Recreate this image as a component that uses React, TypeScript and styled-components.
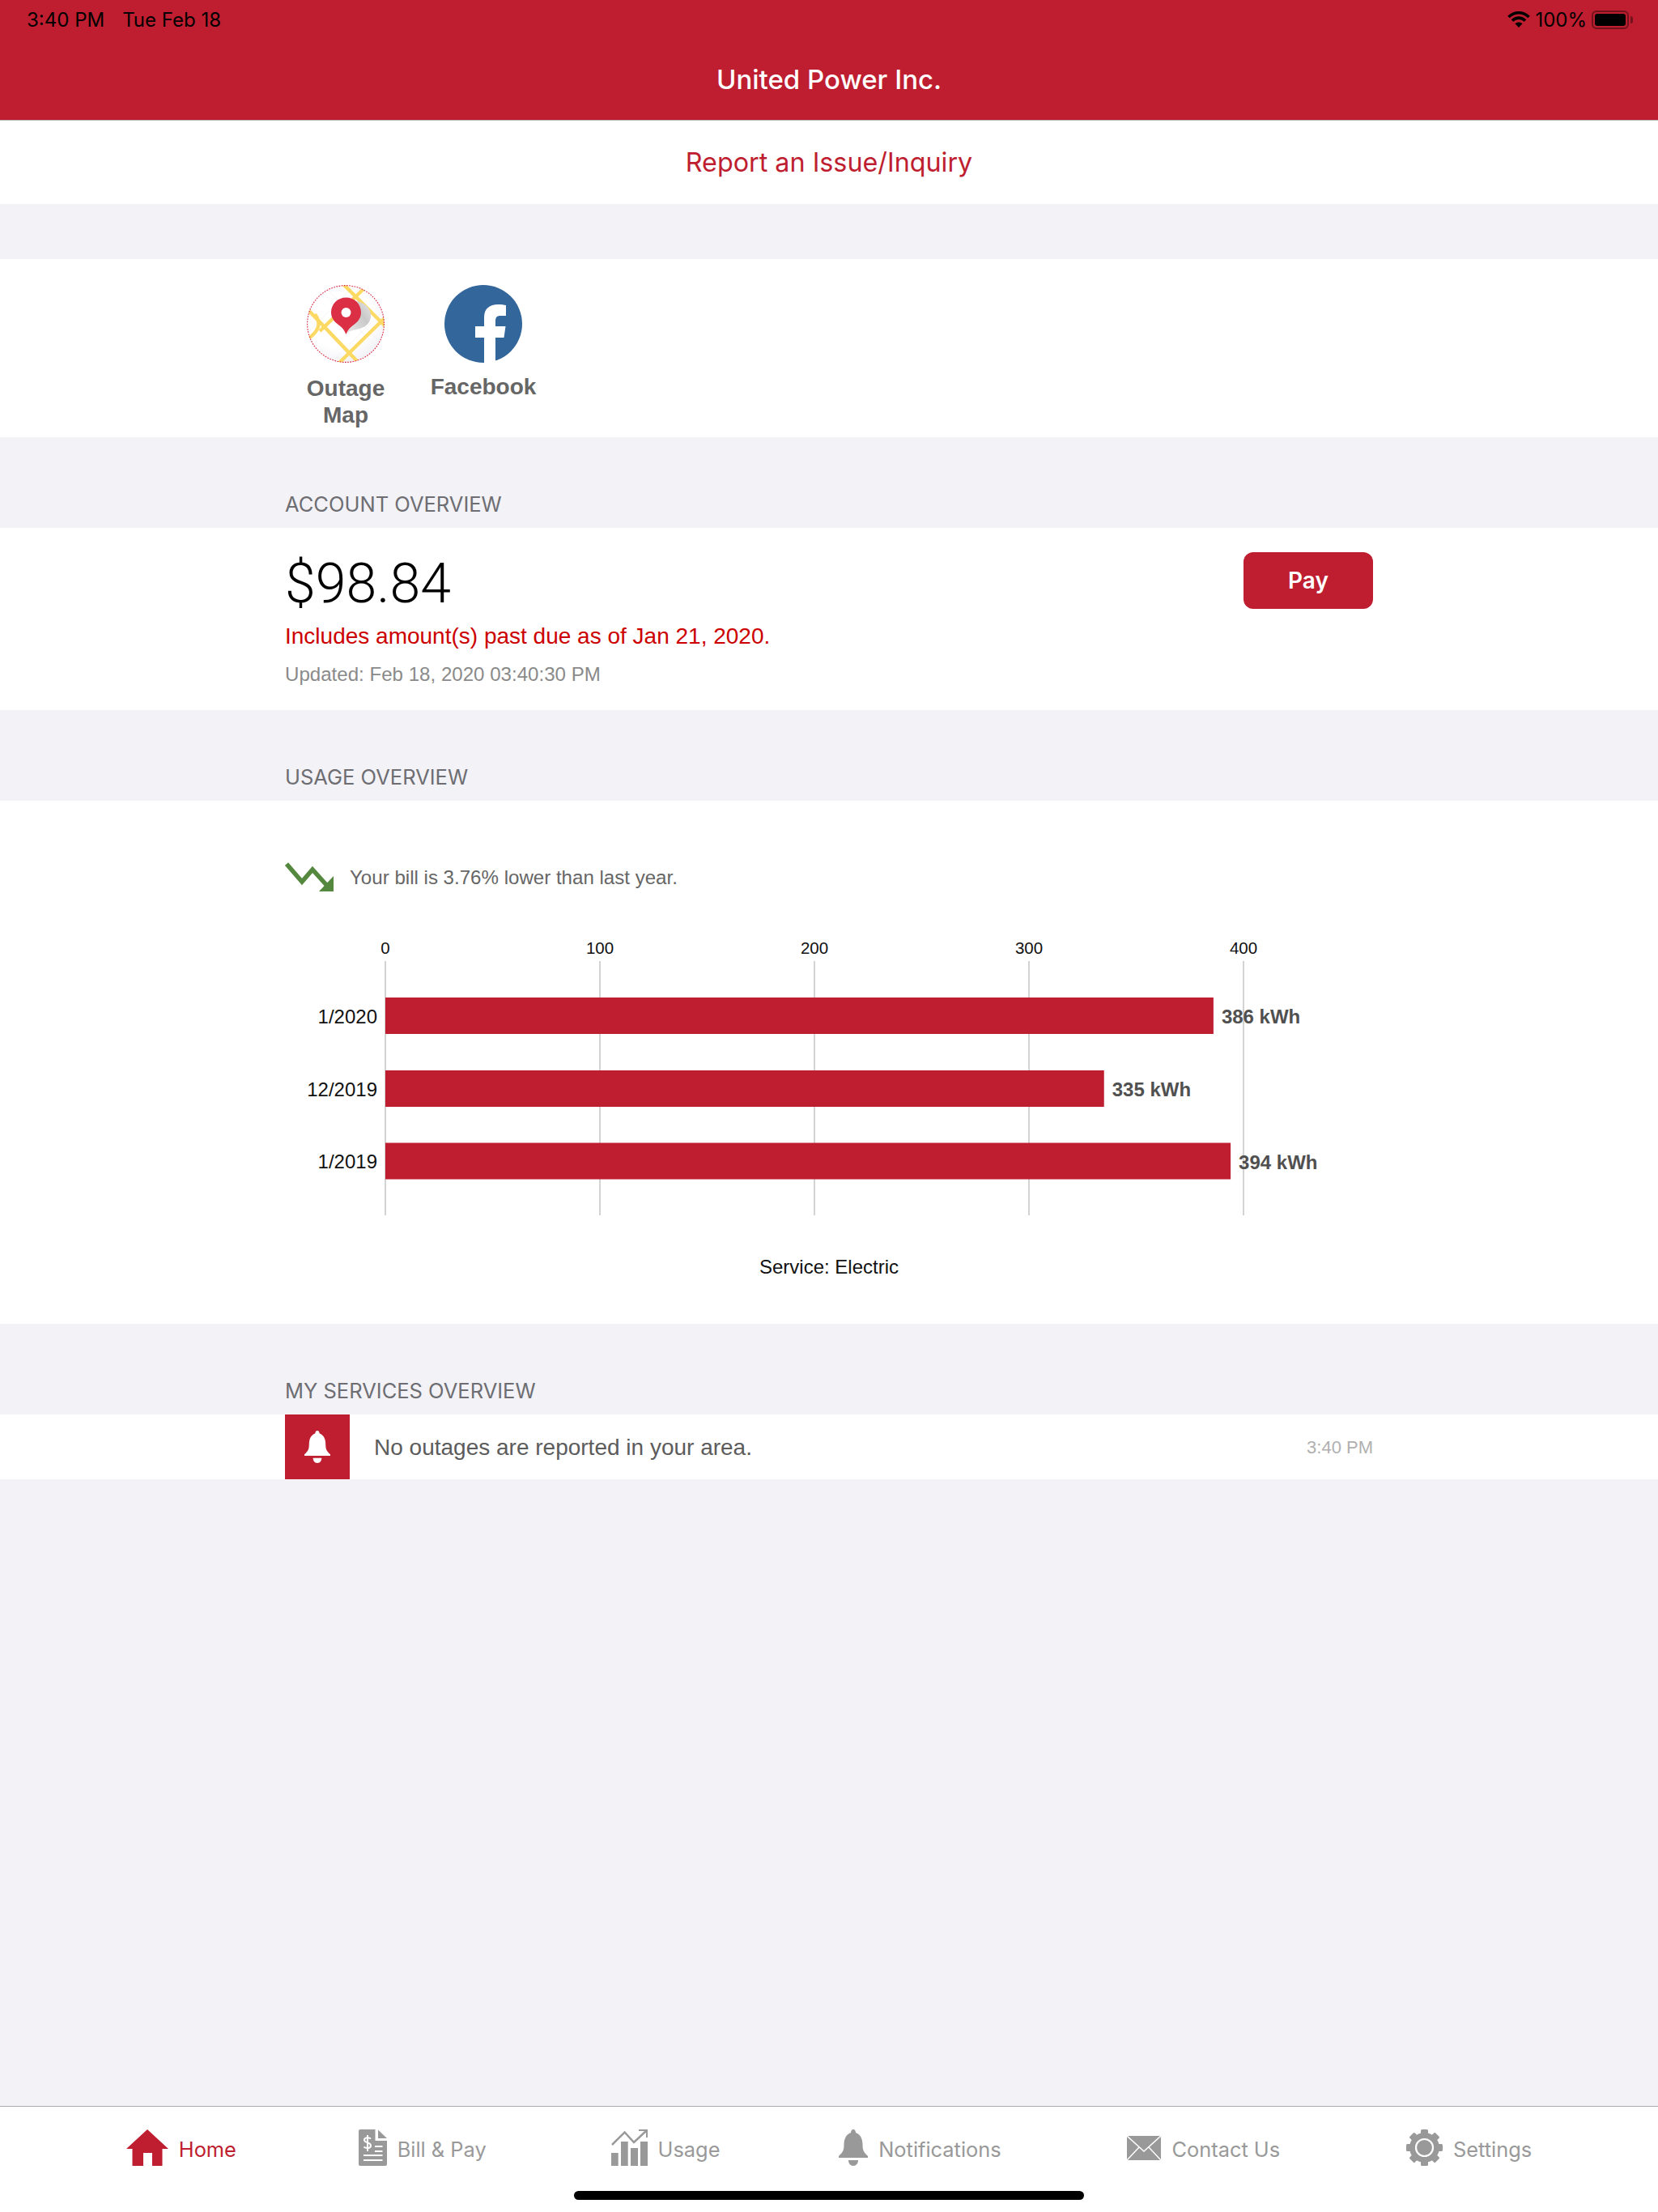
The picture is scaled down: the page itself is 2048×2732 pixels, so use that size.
import React from 'react';
import styled, { createGlobalStyle } from 'styled-components';

const RED = '#be1e2f';
const PAGE = '#f2f2f7';
const SF = `Inter, "Noto Sans", sans-serif`;
const HELV = `"Liberation Sans", Arial, sans-serif`;

const Global = createGlobalStyle`
  html, body { margin: 0; padding: 0; background: ${PAGE}; }
  * { box-sizing: border-box; }
`;

const Page = styled.div`
  position: relative;
  width: 2048px;
  height: 2732px;
  display: flex;
  flex-direction: column;
  background: ${PAGE};
  overflow: hidden;
  font-family: ${HELV};
`;

const Header = styled.header`
  background: ${RED};
  border-bottom: 1px solid #b4b4b4;
  height: 149px;
  flex: none;
`;

const StatusBar = styled.div`
  height: 48px;
  padding: 0 36px 0 33px;
  display: flex;
  align-items: center;
  justify-content: space-between;
  font-family: ${SF};
  font-size: 24px;
  color: #000;
`;

const StatusLeft = styled.div`
  display: flex;
  gap: 22px;
`;

const StatusRight = styled.div`
  display: flex;
  align-items: center;
  gap: 6px;
`;

const Battery = styled.div`
  position: relative;
  width: 46px;
  height: 23px;
  border: 2px solid rgba(0, 0, 0, 0.4);
  border-radius: 6px;
  padding: 2px;
  &::before {
    content: '';
    display: block;
    height: 100%;
    background: #000;
    border-radius: 3px;
  }
  &::after {
    content: '';
    position: absolute;
    right: -7px;
    top: 5px;
    width: 3px;
    height: 9px;
    background: rgba(0, 0, 0, 0.4);
    border-radius: 0 3px 3px 0;
  }
`;

const Title = styled.h1`
  margin: 0;
  height: 100px;
  display: flex;
  align-items: center;
  justify-content: center;
  font-family: ${SF};
  font-size: 33px;
  font-weight: 500;
  color: #fff;
`;

const ReportRow = styled.div`
  height: 103px;
  flex: none;
  padding-bottom: 1px;
  display: flex;
  align-items: center;
  justify-content: center;
  background: #fff;
  font-family: ${SF};
  font-size: 32.3px;
  color: ${RED};
  margin-bottom: 68px;
`;

const Panel = styled.section`
  background: #fff;
  flex: none;
  padding: 0 352px;
`;

const LinksPanel = styled(Panel)`
  height: 220px;
  padding-top: 32px;
  display: flex;
  gap: 20px;
`;

const LinkTile = styled.div`
  width: 150px;
  display: flex;
  flex-direction: column;
  align-items: center;
  svg {
    display: block;
    flex: none;
  }
`;

const LinkLabel = styled.div<{ $top: number }>`
  margin-top: ${(p) => p.$top}px;
  text-align: center;
  font-size: 28px;
  font-weight: 700;
  line-height: 33px;
  color: #666;
`;

const SectionHead = styled.div`
  height: 112px;
  flex: none;
  padding: 0 352px 14px;
  display: flex;
  align-items: flex-end;
  font-family: ${SF};
  font-size: 25.5px;
  line-height: 30px;
  color: #6d6d72;
`;

const AccountPanel = styled(Panel)`
  height: 225px;
  padding-top: 33px;
  display: flex;
  justify-content: space-between;
  align-items: flex-start;
`;

const Amount = styled.div`
  font-family: Roboto, ${HELV};
  font-weight: 300;
  font-size: 68px;
  line-height: 72px;
  color: #000;
`;

const PastDue = styled.div`
  margin-top: 9px;
  font-size: 28px;
  line-height: 40px;
  color: #cc0000;
`;

const Updated = styled.div`
  margin-top: 11px;
  font-size: 24.1px;
  line-height: 32px;
  color: #8a8a8a;
`;

const PayButton = styled.button`
  width: 160px;
  height: 70px;
  margin-top: -3px;
  border: 0;
  border-radius: 12px;
  background: ${RED};
  color: #fff;
  font-family: ${SF};
  font-size: 28px;
  font-weight: 600;
`;

const UsagePanel = styled(Panel)`
  height: 646px;
  padding-top: 76px;
`;

const TrendRow = styled.div`
  height: 36px;
  display: flex;
  align-items: center;
  gap: 20px;
  font-size: 24.1px;
  color: #666;
  svg {
    flex: none;
  }
`;

const TrendText = styled.span`
  padding-top: 2px;
`;

const ChartSvg = styled.svg`
  display: block;
  margin-top: 54px;
`;

const ChartCaption = styled.div`
  margin-top: 40px;
  text-align: center;
  font-size: 24px;
  line-height: 30px;
  color: #111;
`;

const NoticeRow = styled(Panel)`
  height: 80px;
  display: flex;
  align-items: center;
`;

const NoticeIcon = styled.div`
  width: 80px;
  height: 80px;
  flex: none;
  display: flex;
  align-items: center;
  justify-content: center;
  background: ${RED};
`;

const NoticeText = styled.div`
  flex: 1;
  margin-left: 30px;
  padding-top: 2px;
  font-size: 28px;
  color: #5c5c5c;
`;

const NoticeTime = styled.div`
  padding-top: 2px;
  font-size: 22px;
  color: #b0b0b0;
`;

const Spacer = styled.div`
  flex: 1;
`;

const TabBar = styled.nav`
  height: 131px;
  flex: none;
  padding-top: 28px;
  background: #fff;
  border-top: 1px solid #a9a9ad;
  display: flex;
  justify-content: space-evenly;
  align-items: flex-start;
`;

const Tab = styled.div<{ $active?: boolean; $pull?: number }>`
  height: 45px;
  margin-left: ${(p) => -(p.$pull ?? 0)}px;
  display: flex;
  align-items: center;
  gap: 13px;
  font-family: ${SF};
  font-size: 25.4px;
  color: ${(p) => (p.$active ? RED : '#999')};
  svg {
    display: block;
    flex: none;
    fill: currentColor;
  }
`;

const TabLabel = styled.span`
  position: relative;
  top: 2px;
`;

const HomeIndicator = styled.div`
  position: absolute;
  left: 709px;
  top: 2706px;
  width: 630px;
  height: 11px;
  border-radius: 6px;
  background: #000;
`;

const WifiIcon = () => (
  <svg width="28" height="20" viewBox="0 0 28 20" fill="none" stroke="#000" strokeWidth="3.6">
    <path d="M1.5 7 C8.5 0 19.5 0 26.5 7" />
    <path d="M6 11.5 C10.5 7 17.5 7 22 11.5" />
    <path d="M14 20 L9.5 15.2 C12 13 16 13 18.5 15.2 Z" fill="#000" stroke="none" />
  </svg>
);

const OutageIcon = () => (
  <svg width="96" height="96" viewBox="0 0 96 96">
    <defs>
      <clipPath id="mapClip">
        <circle cx="48" cy="48" r="47.5" />
      </clipPath>
      <radialGradient id="mapBg" cx="0.4" cy="0.35" r="0.75">
        <stop offset="0.6" stopColor="#ffffff" />
        <stop offset="1" stopColor="#eeeef4" />
      </radialGradient>
      <linearGradient id="pinShadow" x1="0" y1="1" x2="1" y2="0">
        <stop offset="0" stopColor="#e8e8e8" />
        <stop offset="0.6" stopColor="#c9c9c9" />
        <stop offset="1" stopColor="#e6e6e6" />
      </linearGradient>
    </defs>
    <g clipPath="url(#mapClip)">
      <rect width="96" height="96" fill="url(#mapBg)" />
      <g stroke="#f0f0f2" strokeWidth="0.7">
        <path d="M0 30 L60 96 M20 0 L96 76 M0 60 L60 0 M30 96 L96 30 M10 0 L96 86" />
      </g>
      <g stroke="#fcd962" strokeWidth="4.4" fill="none">
        <path d="M44 -2 L98 52" />
        <path d="M70 5 L16 57" />
        <path d="M1 30 L64 96" />
        <path d="M96 41 L40 96" />
        <path d="M10 36 Q22 52 2 66" />
      </g>
      <path d="M60 20 C80 22 85 42 72 51 C64 56 55 54 50 60 Z" fill="url(#pinShadow)" />
    </g>
    <circle cx="48" cy="48" r="47.4" fill="none" stroke="#d9304a" strokeWidth="1.1" strokeDasharray="1.8 1.4" />
    <path
      d="M48.5 15.5 C59 15.5 67 23.5 67 34 C67 41 62.5 46 57.5 49.5 C53.5 52.3 51 55 48.5 61 C46 55 43.5 52.3 39.5 49.5 C34.5 46 30 41 30 34 C30 23.5 38 15.5 48.5 15.5 Z"
      fill="#db2f45"
    />
    <circle cx="48.5" cy="34" r="6" fill="#fff" />
  </svg>
);

const FacebookIcon = () => (
  <svg width="96" height="96" viewBox="0 0 96 96">
    <circle cx="48" cy="48" r="48" fill="#33669a" />
    <path
      d="M49 96 V65 H38 V51 H49 V40 C49 29 56 24 66 24 C70 24 74 24.5 76 25 V38 H69 C65 38 63 40 63 44 V51 H75.5 L73.5 65 H63 V96 Z"
      fill="#fff"
    />
  </svg>
);

const TrendIcon = () => (
  <svg width="60" height="36" viewBox="0 0 60 36">
    <path d="M2 2 L21 24 L34 9 L53 30" fill="none" stroke="#55883f" strokeWidth="5.5" />
    <path d="M60 17 V36 H42 Z" fill="#55883f" />
  </svg>
);

const BELL =
  'M18 0 C20 0 21 2 21 4 C27 6 29.5 12 29.5 19 C29.5 27 32 29 36 33 V35 H0 V33 C4 29 6.5 27 6.5 19 C6.5 12 9 6 15 4 C15 2 16 0 18 0 Z M12 38 H24 C24 42 21.5 45 18 45 C14.5 45 12 42 12 38 Z';

const HomeIcon = () => (
  <svg width="52" height="45" viewBox="0 0 52 45">
    <path d="M26 0 L52 24 H44.5 V45 H32 V29 H21 V45 H7.5 V24 H0 Z" />
  </svg>
);

const BillIcon = () => (
  <svg width="35" height="45" viewBox="0 0 35 45">
    <path d="M2 0 H20.5 V14 H35 V43 A2 2 0 0 1 33 45 H2 A2 2 0 0 1 0 43 V2 A2 2 0 0 1 2 0 Z" />
    <path d="M24 0.5 L35 11 H24 Z" />
    <g fill="none" stroke="#fff" strokeWidth="2">
      <path d="M15 11.5 C13 9.5 7 9.5 7 13 C7 17 15 15.5 15 20 C15 24 8.5 23.5 6.5 21.5 M11 7 V27" />
      <path d="M20 21 H29.5 M20 27 H29.5 M6 32 H29.5 M6 38 H29.5" />
    </g>
  </svg>
);

const UsageIcon = () => (
  <svg width="45" height="45" viewBox="0 0 45 45">
    <rect x="0" y="29" width="8.7" height="16" />
    <rect x="12" y="15" width="8.7" height="30" />
    <rect x="24" y="23" width="9" height="22" />
    <rect x="36" y="15" width="9" height="30" />
    <path d="M1 19 L16.6 3.5 L28 16 L43.5 1.5" fill="none" stroke="currentColor" strokeWidth="2.5" />
    <path d="M34 0 H45 V10 H43 V2 H34 Z" />
  </svg>
);

const BellTabIcon = () => (
  <svg width="36" height="45" viewBox="0 0 36 45">
    <path d={BELL} />
  </svg>
);

const MailIcon = () => (
  <svg width="42" height="30" viewBox="0 0 42 30">
    <rect width="42" height="30" />
    <path d="M0 0 L21 19 L42 0 M0 30 L15 14 M42 30 L27 14" fill="none" stroke="#fff" strokeWidth="1.5" />
  </svg>
);

const GearIcon = () => (
  <svg width="45" height="45" viewBox="0 0 45 45">
    <circle cx="22.5" cy="22.5" r="18.5" />
    {[0, 45, 90, 135, 180, 225, 270, 315].map((a) => (
      <rect key={a} x="18" y="0" width="9" height="8" rx="1.5" transform={`rotate(${a} 22.5 22.5)`} />
    ))}
    <circle cx="22.5" cy="22.5" r="10.5" fill="none" stroke="#fff" strokeWidth="2.2" />
  </svg>
);

const SCALE = 2.65;
const AXIS_X = 124;
const OFFSET_Y = 1155;
const TICKS = [0, 100, 200, 300, 400];
const BARS = [
  { label: '1/2020', value: 386, top: 1232 },
  { label: '12/2019', value: 335, top: 1322 },
  { label: '1/2019', value: 394, top: 1411.5 },
];

const UsageChart = () => (
  <ChartSvg width="1344" height="355" viewBox="0 0 1344 355">
    {TICKS.map((t) => {
      const x = AXIS_X + t * SCALE;
      return (
        <g key={t}>
          <line x1={x} x2={x} y1={1187 - OFFSET_Y} y2={1501 - OFFSET_Y} stroke="#c4c4c4" strokeWidth="1.5" />
          <text x={x} y={1178 - OFFSET_Y} textAnchor="middle" fontFamily={HELV} fontSize="20.5" fill="#111">
            {t}
          </text>
        </g>
      );
    })}
    {BARS.map((b) => {
      const y = b.top - OFFSET_Y;
      const w = b.value * SCALE;
      return (
        <g key={b.label}>
          <rect x={AXIS_X} y={y} width={w} height="45" fill={RED} />
          <text x={AXIS_X - 10} y={y + 31.5} textAnchor="end" fontFamily={HELV} fontSize="24" fill="#111">
            {b.label}
          </text>
          <text x={AXIS_X + w + 10} y={y + 32} fontFamily={HELV} fontSize="24" fontWeight="700" fill="#505050">
            {b.value} kWh
          </text>
        </g>
      );
    })}
  </ChartSvg>
);

export default function App() {
  return (
    <Page>
      <Global />
      <Header>
        <StatusBar>
          <StatusLeft>
            <span>3:40 PM</span>
            <span>Tue Feb 18</span>
          </StatusLeft>
          <StatusRight>
            <WifiIcon />
            <span>100%</span>
            <Battery />
          </StatusRight>
        </StatusBar>
        <Title>United Power Inc.</Title>
      </Header>
      <ReportRow>Report an Issue/Inquiry</ReportRow>
      <LinksPanel>
        <LinkTile>
          <OutageIcon />
          <LinkLabel $top={15}>
            Outage
            <br />
            Map
          </LinkLabel>
        </LinkTile>
        <LinkTile>
          <FacebookIcon />
          <LinkLabel $top={13}>Facebook</LinkLabel>
        </LinkTile>
      </LinksPanel>
      <SectionHead>ACCOUNT OVERVIEW</SectionHead>
      <AccountPanel>
        <div>
          <Amount>$98.84</Amount>
          <PastDue>Includes amount(s) past due as of Jan 21, 2020.</PastDue>
          <Updated>Updated: Feb 18, 2020 03:40:30 PM</Updated>
        </div>
        <PayButton>Pay</PayButton>
      </AccountPanel>
      <SectionHead>USAGE OVERVIEW</SectionHead>
      <UsagePanel>
        <TrendRow>
          <TrendIcon />
          <TrendText>Your bill is 3.76% lower than last year.</TrendText>
        </TrendRow>
        <UsageChart />
        <ChartCaption>Service: Electric</ChartCaption>
      </UsagePanel>
      <SectionHead>MY SERVICES OVERVIEW</SectionHead>
      <NoticeRow>
        <NoticeIcon>
          <svg width="32" height="40" viewBox="0 0 36 45" fill="#fff">
            <path d={BELL} />
          </svg>
        </NoticeIcon>
        <NoticeText>No outages are reported in your area.</NoticeText>
        <NoticeTime>3:40 PM</NoticeTime>
      </NoticeRow>
      <Spacer />
      <TabBar>
        <Tab $active>
          <HomeIcon />
          <TabLabel>Home</TabLabel>
        </Tab>
        <Tab $pull={5}>
          <BillIcon />
          <TabLabel>Bill &amp; Pay</TabLabel>
        </Tab>
        <Tab $pull={2}>
          <UsageIcon />
          <TabLabel>Usage</TabLabel>
        </Tab>
        <Tab $pull={9}>
          <BellTabIcon />
          <TabLabel>Notifications</TabLabel>
        </Tab>
        <Tab>
          <MailIcon />
          <TabLabel>Contact Us</TabLabel>
        </Tab>
        <Tab>
          <GearIcon />
          <TabLabel>Settings</TabLabel>
        </Tab>
      </TabBar>
      <HomeIndicator />
    </Page>
  );
}
